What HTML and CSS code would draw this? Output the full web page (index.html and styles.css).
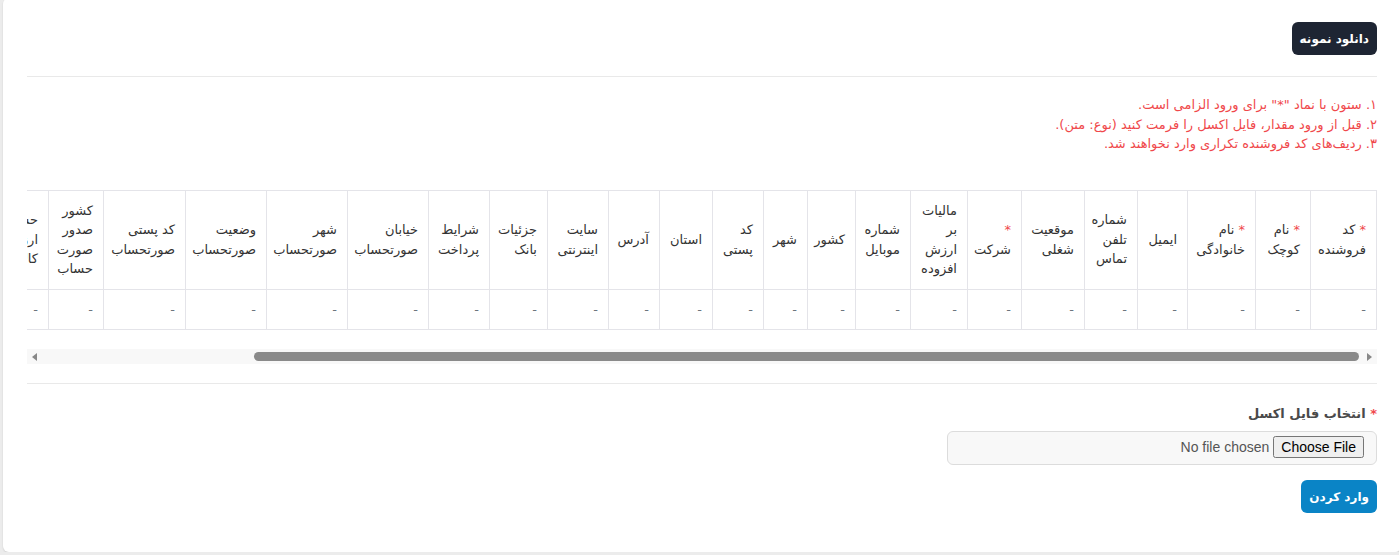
FILE: index.html
```html
<!DOCTYPE html>
<html lang="fa" dir="rtl">
<head>
    <meta charset="UTF-8">
    <meta name="viewport" content="width=device-width, initial-scale=1.0">
    <title>ورود فروشندگان از اکسل</title>
    <link rel="stylesheet" href="styles.css">
</head>
<body>
    <div class="card">
        <!-- دکمه دانلود فایل نمونه -->
        <div class="toolbar">
            <button type="button" class="btn btn-dark">دانلود نمونه</button>
        </div>
        <hr class="sep">

        <!-- راهنما -->
        <div class="notes">
            <div>۱. ستون با نماد "*" برای ورود الزامی است.</div>
            <div>۲. قبل از ورود مقدار، فایل اکسل را فرمت کنید (نوع: متن).</div>
            <div>۳. ردیف‌های کد فروشنده تکراری وارد نخواهند شد.</div>
        </div>

        <!-- جدول ستون‌های فایل -->
        <div class="table-scroll" id="tableScroll">
            <table class="sample-table">
                <colgroup>
                    <col class="w66"><col class="w55"><col class="w68"><col class="w50"><col class="w53">
                    <col class="w63"><col class="w54"><col class="w57"><col class="w55"><col class="w48">
                    <col class="w44"><col class="w51"><col class="w53"><col class="w51"><col class="w61">
                    <col class="w58"><col class="w61"><col class="w81"><col class="w81"><col class="w81">
                    <col class="w82"><col class="w55"><col class="w56"><col class="w70"><col class="w70">
                    <col class="w80">
                </colgroup>
                <thead>
                    <tr>
                        <th><span class="req">*</span> کد فروشنده</th>
                        <th><span class="req">*</span> نام کوچک</th>
                        <th><span class="req">*</span> نام خانوادگی</th>
                        <th>ایمیل</th>
                        <th>شماره تلفن تماس</th>
                        <th>موقعیت شغلی</th>
                        <th><span class="req">*</span><br>شرکت</th>
                        <th>مالیات بر ارزش افزوده</th>
                        <th>شماره موبایل</th>
                        <th>کشور</th>
                        <th>شهر</th>
                        <th>کد پستی</th>
                        <th>استان</th>
                        <th>آدرس</th>
                        <th>سایت اینترنتی</th>
                        <th>جزئیات بانک</th>
                        <th>شرایط پرداخت</th>
                        <th>خیابان صورتحساب</th>
                        <th>شهر صورتحساب</th>
                        <th>وضعیت صورتحساب</th>
                        <th>کد پستی صورتحساب</th>
                        <th>کشور صدور صورت حساب</th>
                        <th>حساب ارز کالا</th>
                        <th>شماره اقتصادی</th>
                        <th>شناسه ملی</th>
                        <th>توضیحات</th>
                    </tr>
                </thead>
                <tbody>
                    <tr id="sampleRow"></tr>
                </tbody>
            </table>
        </div>
        <div class="hscroll">
            <span class="hscroll-btn"><span class="arrow-left"></span></span>
            <div class="hscroll-track"><div class="hscroll-thumb" id="thumb"></div></div>
            <span class="hscroll-btn"><span class="arrow-right"></span></span>
        </div>
        <hr class="sep sep-low">

        <!-- انتخاب فایل و ورود -->
        <form class="import-form">
            <label class="form-label" for="excelFile"><span class="req">*</span> انتخاب فایل اکسل</label>
            <input type="file" id="excelFile" class="form-control" accept=".xlsx,.xls">
            <div>
                <button type="submit" class="btn btn-primary">وارد کردن</button>
            </div>
        </form>
    </div>
    <script>
        // ردیف نمونه خالی
        var row = document.getElementById('sampleRow');
        var cols = document.querySelectorAll('.sample-table thead th').length;
        for (var i = 0; i < cols; i++) {
            var td = document.createElement('td');
            td.textContent = '-';
            row.appendChild(td);
        }

        // اندازه نوار اسکرول
        var box = document.getElementById('tableScroll');
        var thumb = document.getElementById('thumb');
        var track = thumb.parentNode;
        var trackWidth = track.clientWidth - 6;
        thumb.style.width = Math.round(trackWidth * box.clientWidth / box.scrollWidth) + 'px';
    </script>
</body>
</html>
```

FILE: styles.css
```css
body {
    margin: 0;
    background: #ececec;
    font-family: "DejaVu Sans", "Noto Sans", sans-serif;
    font-size: 13px;
    color: #333;
}

.card {
    background: #fff;
    margin: -2px -2px 0 3px;
    padding: 24px 24px 39px 24px;
    border-radius: 6px;
    box-shadow: 0 1px 2px rgba(0, 0, 0, 0.12);
}

.toolbar {
    display: flex;
}

.btn {
    font-family: inherit;
    font-size: 12px;
    font-weight: bold;
    color: #fff;
    border: none;
    border-radius: 6px;
    padding: 0 8px;
    height: 33px;
    cursor: pointer;
}

    .btn-dark {
        background: #1e2533;
    }

    .btn-primary {
        background: #0a84c6;
    }

.sep {
    border: 0;
    border-top: 1px solid #e9e9e9;
    margin: 21px 0 18px 0;
}

    .sep-low {
        margin-top: 19px;
    }

.notes {
    color: #f0484b;
    line-height: 19.5px;
    margin-bottom: 36px;
}

.req {
    color: #f0484b;
}

.table-scroll {
    overflow-x: auto;
    scrollbar-width: none;
    padding-bottom: 19px;
}

.sample-table {
    border-collapse: collapse;
    table-layout: fixed;
    width: 1600px;
}

    .sample-table th,
    .sample-table td {
        border: 1px solid #e4e4e9;
        padding: 10px;
        text-align: right;
        line-height: 19.5px;
        overflow: hidden;
    }

    .sample-table th {
        font-weight: normal;
        color: #333;
        vertical-align: middle;
    }

    .sample-table td {
        color: #6c757d;
    }

.w44 { width: 44px; }
.w48 { width: 48px; }
.w50 { width: 50px; }
.w51 { width: 51px; }
.w53 { width: 53px; }
.w54 { width: 54px; }
.w55 { width: 55px; }
.w56 { width: 56px; }
.w57 { width: 57px; }
.w58 { width: 58px; }
.w61 { width: 61px; }
.w63 { width: 63px; }
.w66 { width: 66px; }
.w68 { width: 68px; }
.w70 { width: 70px; }
.w80 { width: 80px; }
.w81 { width: 81px; }
.w82 { width: 82px; }

/* نوار اسکرول افقی */
.hscroll {
    direction: ltr;
    display: flex;
    align-items: center;
    height: 15px;
    background: #f8f8f8;
}

.hscroll-btn {
    width: 15px;
    display: flex;
    justify-content: center;
}

.arrow-left {
    border-top: 4px solid transparent;
    border-bottom: 4px solid transparent;
    border-right: 5px solid #888;
}

.arrow-right {
    border-top: 4px solid transparent;
    border-bottom: 4px solid transparent;
    border-left: 5px solid #888;
}

.hscroll-track {
    flex: 1;
    display: flex;
    justify-content: flex-end;
    padding: 0 3px;
}

.hscroll-thumb {
    height: 9px;
    border-radius: 5px;
    background: #8a8a8a;
}

.import-form {
    padding-top: 4px;
}

.form-label {
    display: block;
    font-weight: bold;
    color: #4a4a4a;
    margin-bottom: 10px;
}

.form-control {
    display: block;
    width: 430px;
    height: 34px;
    box-sizing: border-box;
    background: #f8f8f8;
    border: 1px solid #dcdcdc;
    border-radius: 6px;
    padding: 4px 12px;
    font-family: "Liberation Sans", Arial, sans-serif;
    font-size: 14px;
    color: #555;
    margin-bottom: 15px;
}
```
